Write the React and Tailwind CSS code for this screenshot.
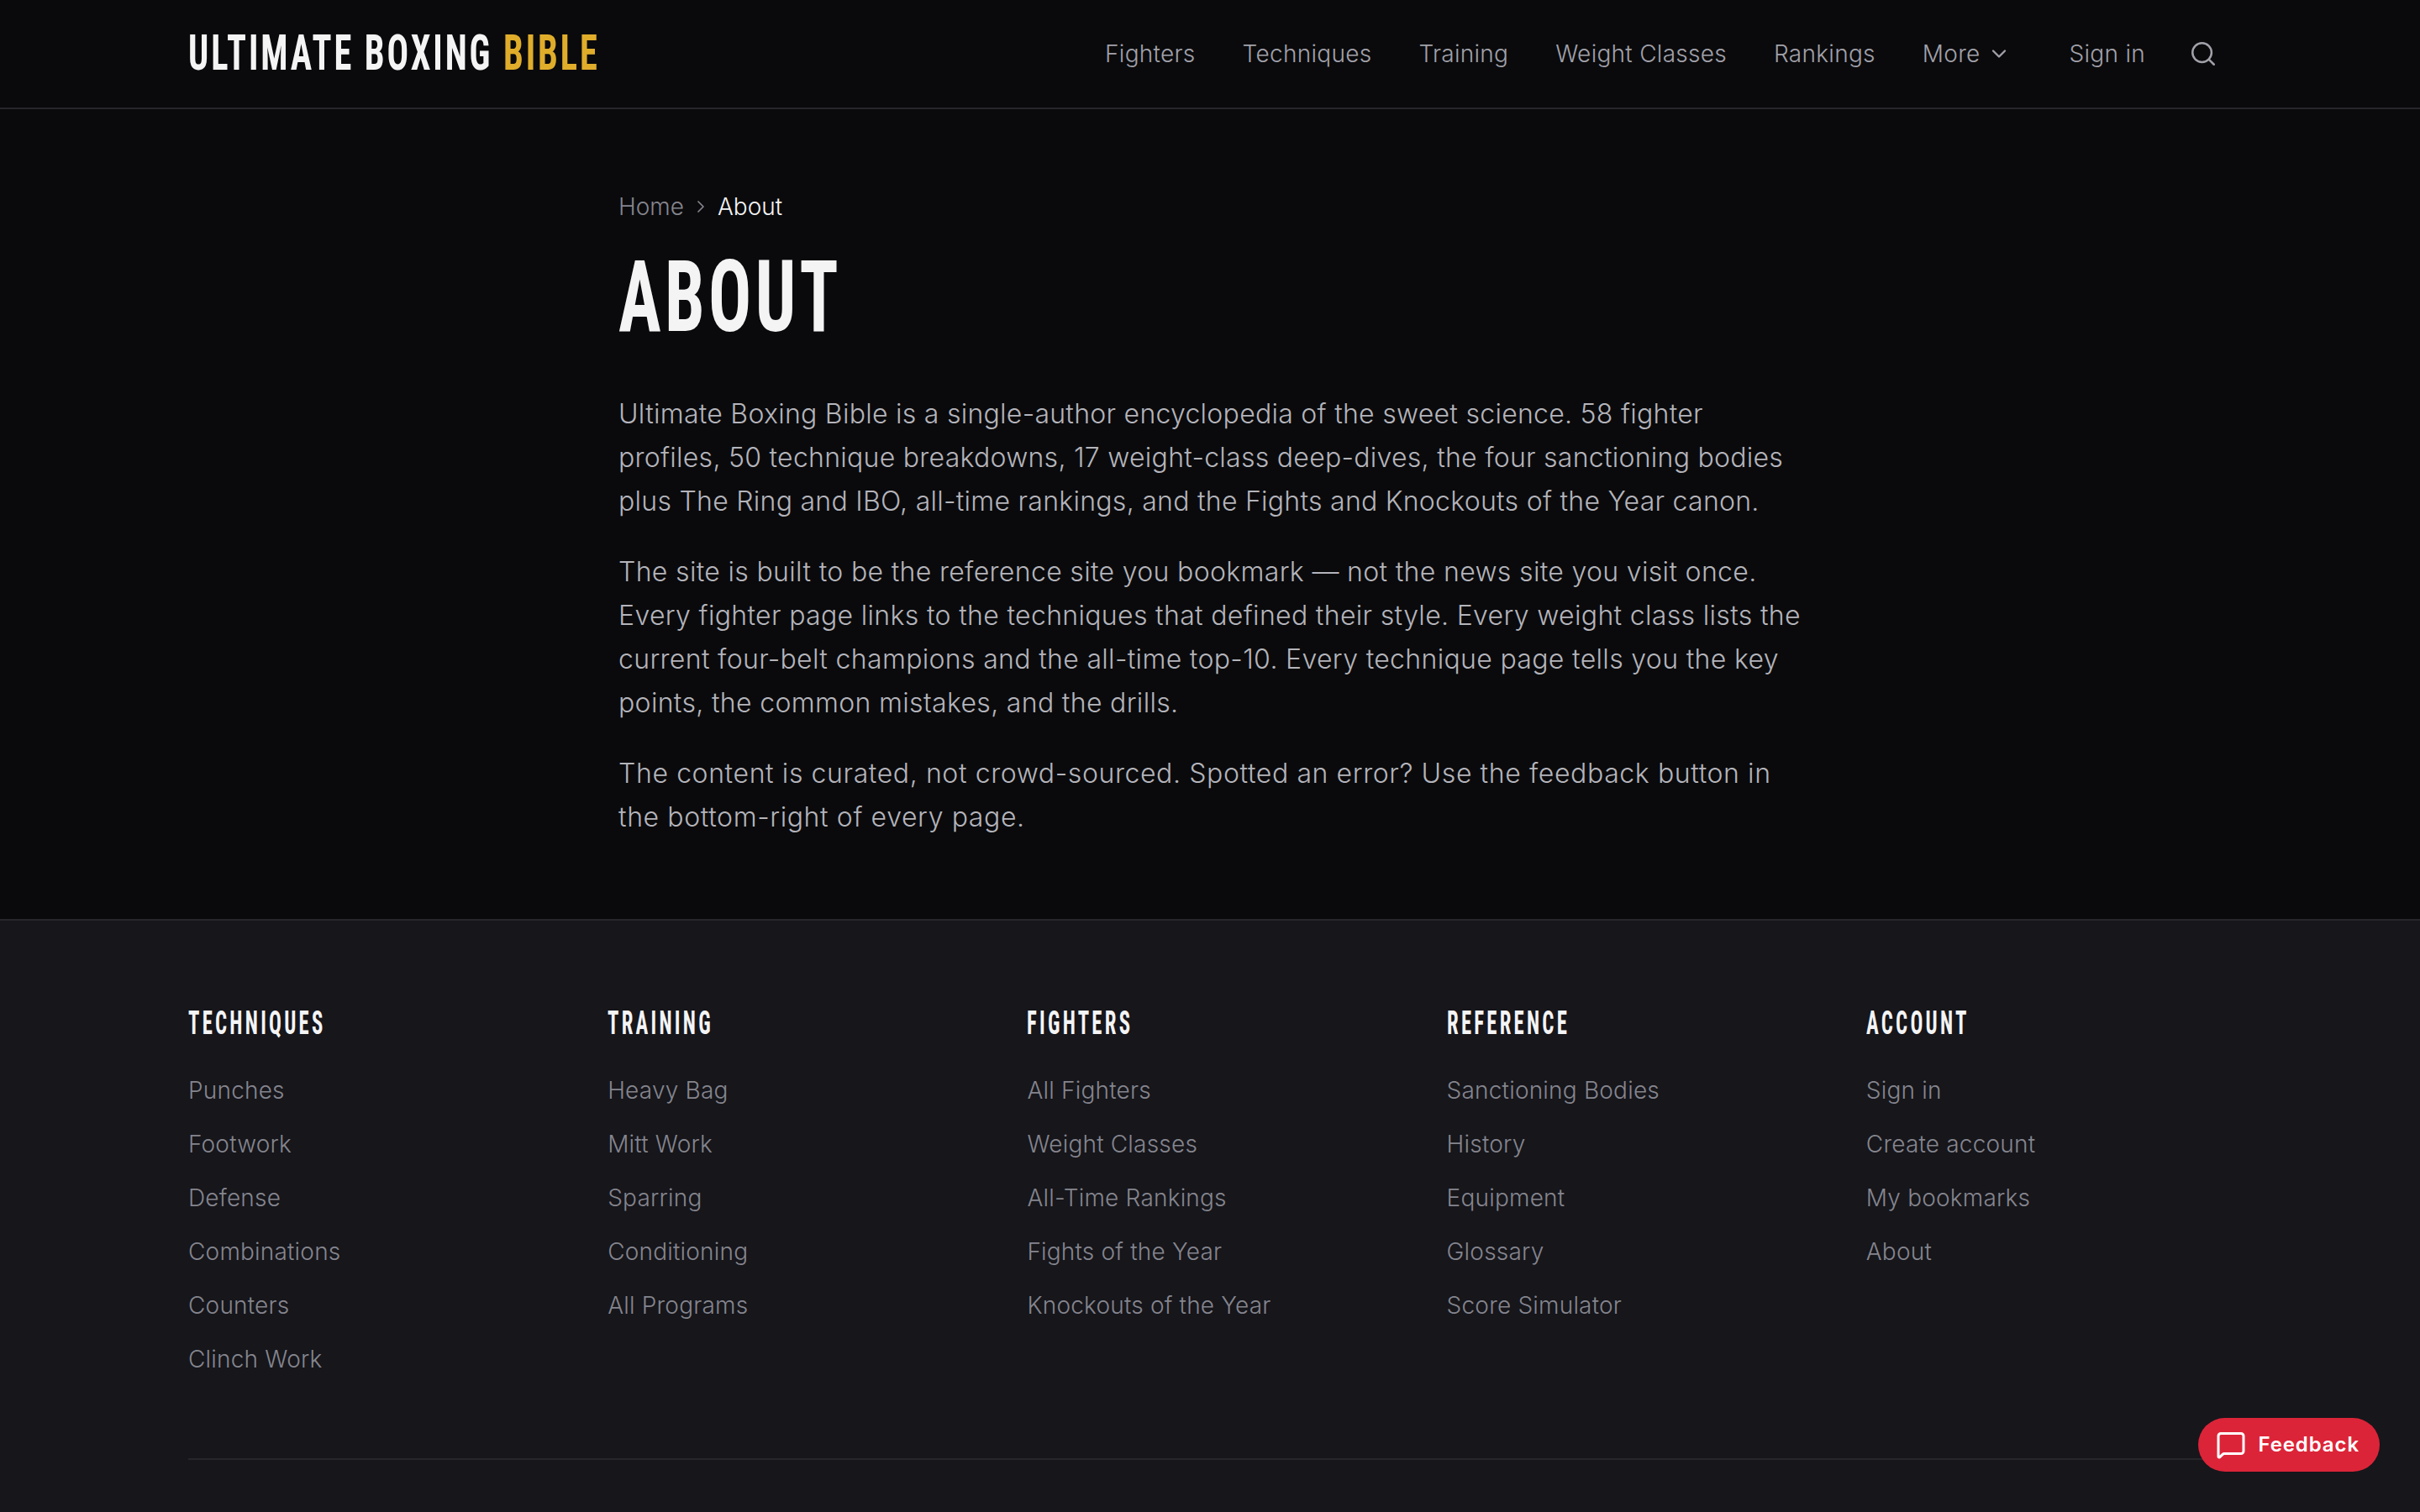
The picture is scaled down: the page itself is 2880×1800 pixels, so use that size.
import React from 'react'
import { ChevronDown, ChevronRight, Search, MessageSquare } from 'lucide-react'

const navLinks = ['Fighters', 'Techniques', 'Training', 'Weight Classes', 'Rankings']

const footerColumns = [
  { title: 'Techniques', links: ['Punches', 'Footwork', 'Defense', 'Combinations', 'Counters', 'Clinch Work'] },
  { title: 'Training', links: ['Heavy Bag', 'Mitt Work', 'Sparring', 'Conditioning', 'All Programs'] },
  { title: 'Fighters', links: ['All Fighters', 'Weight Classes', 'All-Time Rankings', 'Fights of the Year', 'Knockouts of the Year'] },
  { title: 'Reference', links: ['Sanctioning Bodies', 'History', 'Equipment', 'Glossary', 'Score Simulator'] },
  { title: 'Account', links: ['Sign in', 'Create account', 'My bookmarks', 'About'] },
]

export default function App() {
  return (
    <div className="min-h-screen flex flex-col bg-[#0a0a0c] font-['Inter',sans-serif] font-[350] [text-rendering:optimizeSpeed] text-[#f4f4f5]">
      <header className="border-b-2 border-[#26262b]">
        <div className="mx-auto max-w-[2560px] h-[128px] px-[64px] flex items-center justify-between">
          <a className="inline-block mb-[3px] origin-left scale-x-[0.72] font-['Roboto',sans-serif] [font-stretch:75%] font-bold text-[59px] leading-none tracking-[4px] uppercase whitespace-nowrap">
            Ultimate Boxing <span className="text-[#e0ad2b]">Bible</span>
          </a>
          <nav className="flex items-center text-[28px] leading-[40px] tracking-[0.28px] text-[#a1a1aa]">
            <div className="flex items-center gap-[56px]">
              {navLinks.map((l) => (
                <a key={l}>{l}</a>
              ))}
              <a className="flex items-center gap-[8px]">
                More <ChevronDown size={28} strokeWidth={2} />
              </a>
            </div>
            <a className="ml-[70px]">Sign in</a>
            <button className="ml-[35px] p-[17px]">
              <Search size={34} strokeWidth={1.75} />
            </button>
          </nav>
        </div>
      </header>

      <main className="mx-auto w-full max-w-[1536px] px-[64px] pt-[96px] pb-[95px]">
        <div className="flex items-center gap-[8px] text-[28px] leading-[40px] text-[#85858e]">
          <a>Home</a>
          <ChevronRight size={24} strokeWidth={1.75} />
          <span className="text-[#f4f4f5]">About</span>
        </div>
        <h1 className="mt-[28px] origin-left scale-x-[0.72] font-['Roboto',sans-serif] [font-stretch:75%] font-bold text-[118px] leading-[120px] tracking-[6px] uppercase">About</h1>
        <div className="mt-[53px] flex flex-col gap-[32px] text-[32px] leading-[52px] text-[#b4b4bb]">
          <p className="tracking-[0.27px]">
            Ultimate Boxing Bible is a single-author encyclopedia of the sweet science. 58 fighter profiles, 50 technique breakdowns, 17 weight-class deep-dives, the four sanctioning bodies plus The Ring and IBO, all-time rankings, and the Fights and Knockouts of the Year canon.
          </p>
          <p className="tracking-[0.33px]">
            The site is built to be the reference site you bookmark — not the news site you visit once. Every fighter page links to the techniques that defined their style. Every weight class lists the current four-belt champions and the all-time top-10. Every technique page tells you the key points, the common mistakes, and the drills.
          </p>
          <p className="tracking-[0.6px]">
            The content is curated, not crowd-sourced. Spotted an error? Use the feedback button in the bottom-right of every page.
          </p>
        </div>
      </main>

      <footer className="flex-1 border-t-2 border-[#26262b] bg-[#16161b]">
        <div className="mx-auto max-w-[2560px] px-[64px] pt-[96px]">
          <div className="grid grid-cols-5 gap-[64px] pb-[98px] border-b-2 border-[#26262b]">
            {footerColumns.map((col) => (
              <div key={col.title}>
                <h3 className="origin-left scale-x-[0.65] font-['Roboto',sans-serif] [font-stretch:75%] font-bold text-[38px] leading-[52px] tracking-[5px] uppercase">{col.title}</h3>
                <ul className="mt-[34px] flex flex-col gap-[24px] text-[28px] leading-[40px] tracking-[0.2px] text-[#85858e]">
                  {col.links.map((l) => (
                    <li key={l}>{l}</li>
                  ))}
                </ul>
              </div>
            ))}
          </div>
        </div>
      </footer>

      <button className="fixed right-[48px] bottom-[48px] h-[64px] pl-[21px] pr-[24px] rounded-full bg-[#dc2438] flex items-center gap-[14px] text-[24px] font-semibold tracking-[0.9px] text-white">
        <MessageSquare size={36} strokeWidth={2} />
        Feedback
      </button>
    </div>
  )
}
